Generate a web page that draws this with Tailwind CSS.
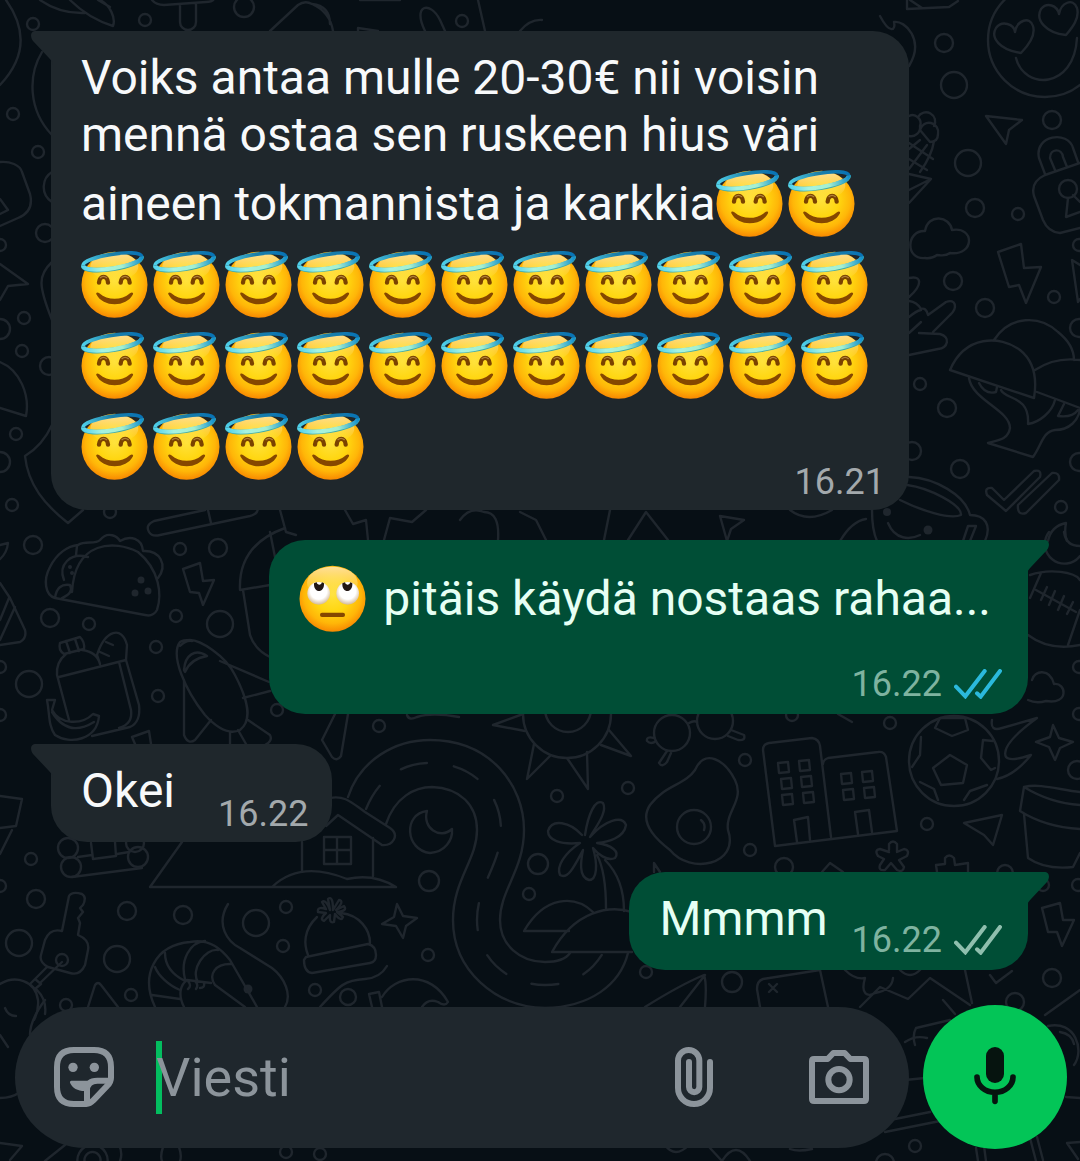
<!DOCTYPE html>
<html lang="fi">
<head>
    <meta charset="UTF-8">
    <meta name="viewport" content="width=device-width, initial-scale=1.0">
    <title>Keskustelu</title>
    <script src="https://cdn.jsdelivr.net/npm/@tailwindcss/browser@4"></script>
</head>
<body class="bg-[#070f15] font-['Roboto','Liberation_Sans',sans-serif]">
    <!-- Shared emoji and icon shapes -->
    <svg class="absolute h-0 w-0" aria-hidden="true">
        <defs>
            <radialGradient id="skin" cx="0.5" cy="0.44" r="0.58">
                <stop offset="0" stop-color="#ffe23c"></stop>
                <stop offset="0.45" stop-color="#ffd610"></stop>
                <stop offset="0.75" stop-color="#ffb608"></stop>
                <stop offset="1" stop-color="#f78200"></stop>
            </radialGradient>
            <linearGradient id="shine" x1="0" y1="0" x2="0" y2="1">
                <stop offset="0" stop-color="#ffe2a0" stop-opacity="0.95"></stop>
                <stop offset="1" stop-color="#ffe46a" stop-opacity="0"></stop>
            </linearGradient>
            <linearGradient id="ringBack" x1="0" y1="0" x2="1" y2="0">
                <stop offset="0" stop-color="#4fd0ea"></stop>
                <stop offset="0.5" stop-color="#1c7fa8"></stop>
                <stop offset="1" stop-color="#0873b5"></stop>
            </linearGradient>
            <linearGradient id="ringFront" x1="0" y1="0" x2="1" y2="0">
                <stop offset="0" stop-color="#55d3ee"></stop>
                <stop offset="0.3" stop-color="#a6f3e0"></stop>
                <stop offset="0.65" stop-color="#a4efcf"></stop>
                <stop offset="1" stop-color="#1390cf"></stop>
            </linearGradient>
            <radialGradient id="eyeball" cx="0.5" cy="0.4" r="0.6">
                <stop offset="0.6" stop-color="#ffffff"></stop>
                <stop offset="1" stop-color="#d3b998"></stop>
            </radialGradient>
        </defs>
        <symbol id="innocent" viewBox="0 0 216 243">
            <circle cx="100.5" cy="122" r="99" fill="url(#skin)"></circle>
            <ellipse cx="100" cy="68" rx="72" ry="42" fill="url(#shine)"></ellipse>
            <g transform="rotate(-9 94 51)" fill="none">
                <path d="M5 51C5 24 183 24 183 51" stroke="url(#ringBack)" stroke-width="11"></path>
                <path d="M5 52C5 82 183 82 183 52" stroke="#3fa9a8" stroke-width="14"></path>
                <path d="M5 51C5 80 183 80 183 51" stroke="url(#ringFront)" stroke-width="12"></path>
            </g>
            <g fill="none" stroke="#7a4200" stroke-width="13" stroke-linecap="round">
                <path d="M54 116C55 93 80 93 81 116"></path>
                <path d="M119 116C120 93 145 93 146 116"></path>
            </g>
            <g fill="none" stroke="#b0803a" stroke-width="4" stroke-linecap="round">
                <path d="M58 101Q67 93 77 101"></path>
                <path d="M123 101Q132 93 142 101"></path>
            </g>
            <path d="M46 151C44 145 50 143 55 148C80 170 122 170 147 148C152 143 158 145 156 151C136 191 66 191 46 151Z" fill="#854700"></path>
        </symbol>
        <symbol id="eyeroll" viewBox="0 0 216 243">
            <circle cx="100.5" cy="122" r="99" fill="url(#skin)"></circle>
            <ellipse cx="100" cy="74" rx="76" ry="48" fill="url(#shine)"></ellipse>
            <circle cx="59" cy="106" r="34" fill="url(#eyeball)"></circle>
            <circle cx="146" cy="106" r="34" fill="url(#eyeball)"></circle>
            <path d="M45 76C43 107 77 107 75 76L69 73Q67 81 60 80Q53 79 53 73Z" fill="#231815"></path>
            <path d="M130 76C128 107 162 107 160 76L154 73Q152 81 145 80Q138 79 138 73Z" fill="#231815"></path>
            <rect x="63" y="164" width="75" height="13" rx="6" fill="#854700"></rect>
        </symbol>
        <symbol id="ticks" viewBox="0 0 144 90">
            <path d="M6 53L34 82L92 6M69 73L80 83L138 6" fill="none" stroke="currentColor" stroke-width="12" stroke-linecap="round" stroke-linejoin="miter"></path>
        </symbol>
        <symbol id="tail" viewBox="0 0 22 34">
            <path d="M0 0H17C23 0 23 6 20 10L4 27Q0 31 0 34Z" fill="currentColor"></path>
        </symbol>
    </svg>

    <div class="relative flex min-h-screen flex-col overflow-hidden">
        <!-- Wallpaper doodles -->
        <svg class="absolute top-0 left-0 h-[1161px] w-[1080px]" viewBox="0 0 1080 1161" fill="none" stroke="#1f262d" stroke-width="2.4" stroke-linecap="round" stroke-linejoin="round" aria-hidden="true">
            <g id="dots"></g>
            <g fill="#1f262d" stroke="none">
                <circle cx="887" cy="512" r="4"></circle><circle cx="928" cy="530" r="4.500"></circle>
                <circle cx="141" cy="580" r="3.500"></circle><circle cx="148" cy="591" r="3.500"></circle><circle cx="135" cy="593" r="3.500"></circle>
                <circle cx="248" cy="989" r="4.500"></circle><circle cx="70" cy="567" r="2"></circle><circle cx="72" cy="573" r="2"></circle>
            </g>
            <!-- top edge -->
            <path d="M6 0Q38 45 0 85M40 0Q60 14 85 13M70 0C85 15 100 22 113 26C116 18 110 5 100 0M98 0l12 7"></path>
            <path d="M152 0q4 5 12 5l42-3q6 0 8-3M180 5V22a8 8 0 0 0 16 0V4M270 31L298 5Q305 0 312 4Q330 12 333 31M312 4q18 2 18 20"></path>
            <path d="M425 31C412 5 430 0 440 20l5 11M478 0L485 31M520 31q10-12 22-11M360 0h40M358 31v-3l20 3"></path>
            <path d="M907 0v9l42-2 9-6M910 0l12 8M880 16C890 35 896 30 894 22C905 20 925 40 909 66"></path>
            <!-- left edge -->
            <path d="M42 52C28 75 28 110 52 135M0 162C10 161 20 165 22 172L30 194C33 206 28 214 18 218L0 226M0 199L8 210L0 214M0 264L28 284L8 286L0 300"></path>
            <path d="M52 262C38 275 38 285 52 320M0 362C20 370 30 395 26 416L0 408M52 425C45 440 35 450 25 456C28 485 45 505 68 523L83 510M52 172c-10 6-12 22 0 30"></path>
            <!-- heart eyes, berry, plane -->
            <circle cx="1045" cy="40" r="57"></circle>
            <path d="M1016 58C1024 90 1074 90 1077 38M1021 53C1000 50 990 38 996 28C1002 20 1014 24 1015 32C1017 20 1030 16 1033 26C1036 36 1028 46 1021 53ZM1066 35C1046 33 1035 20 1041 9C1047 2 1057 5 1059 14C1061 3 1073-3 1077 8C1080 18 1072 28 1066 35Z"></path>
            <path d="M909 116a8 8 0 0 1 11 10a9 9 0 0 1-11 10M918 117a9 9 0 0 1 16 9M920 130a9 9 0 0 1 18 4q0 8-8 8l-10-12M934 141C932 155 925 165 920 172M909 149l11-9M909 143l24 16M909 159l18 11M927 145l-18 24M909 174L931 179L909 203M909 190L931 179"></path>
            <path d="M986 116L1022 120L1009 130L1006 144Z"></path>
            <!-- padlock -->
            <path d="M1045 174L1039 158C1034 135 1068 130 1073 148L1078 162M1080 163L1045 175Q1030 182 1034 196L1043 220Q1048 232 1060 233L1080 228M1055 170L1050 158C1050 148 1062 148 1063 157l4 10M1068 198L1066 217L1080 212M1073 195L1080 202"></path>
            <circle cx="1068" cy="189" r="9"></circle>
            <!-- cloud, bolt, hand -->
            <path d="M925 258C905 260 906 230 925 231C928 213 950 216 952 230C975 226 975 256 950 253C945 257 940 255 937 255Q932 259 925 258Z"></path>
            <path d="M998 252L1021 244L1024 268L1041 267L1026 303L1019 285L1009 287ZM1080 265l-8-5 6 42 2-3"></path>
            <path d="M909 278C922 275 923 285 909 297M909 301q8 1 12 8q5-2 7 6L946 302C956 298 958 308 950 315L933 332M909 333l12-11M909 317q7-6 12-7M919 333L940 334C951 337 948 348 938 349L909 355"></path>
            <!-- mushrooms -->
            <path d="M950 370C965 335 1000 335 1020 350C1035 362 1037 380 1034 398ZM994 340C1010 315 1040 315 1058 332C1068 340 1074 350 1074 360M1035 370C1050 360 1065 358 1080 360M1037 392L1080 408"></path>
            <path d="M969 378C972 400 1010 410 1010 428C1008 440 998 440 988 443L1033 457C1042 445 1042 432 1055 430C1070 430 1078 420 1080 410M1001 390C1005 400 1030 395 1028 424C1040 422 1052 412 1055 400M979 383q6 12 17 9l1-5M1064 404l-6 12q14 2 20-6"></path>
            <!-- double tick, cup -->
            <path d="M987 495q-3-8 5-7l12 12L1034 471q8-2 6 6L1006 511ZM1018 505L1052 473q8-1 7 7L1026 513q-9 3-8-8Z"></path>
            <path d="M909 477C935 478 965 495 970 515C985 515 992 525 985 541M907 485C930 488 962 505 961 515C950 520 920 510 900 500M963 541l5-15h8l-6 15M888 523C895 540 910 540 920 535M1048 541q3-15 18-18q-2 10 1 18M872 510q0 20 5 31"></path>
            <!-- rugby ball, cloud -->
            <path d="M1049 532a18 18 0 1 0 31 24M1064 532q2 14 16 14M1030 575C1050 568 1075 572 1080 580M1028 635C1045 648 1065 648 1080 645M1041 573L1030 598M1080 610L1068 645M1036 590L1076 612M1047 587l-6 13M1055 591l-6 14M1064 596l-6 14M1073 602l-6 12"></path>
            <path d="M1028 700Q1036 704 1046 701C1070 705 1066 682 1054 684C1050 668 1034 670 1032 680"></path>
            <!-- strip between the first two bubbles -->
            <path d="M205 510L154 521q-9 4-5 11q3 5 11 3L250 516q8-2 8-8M208 510l3 13M0 545l8-2q-1 10-8 16M280 510l6 22 10 3M345 510l8 14 13-4 2 20M384 540l6-22 22 4 14-12M460 520q10-14 24-8q16 0 14 28M520 512l16 8 10 20M610 510l-6 30M628 540l18-28 22 28M720 516l24 4-13 9-4 12ZM790 510q18 14 42 0M840 541q12-20 26-22"></path>
            <!-- taco, bolt -->
            <path d="M72 592C75 540 115 540 138 552C160 570 162 595 157 610Q153 617 145 615L55 598C45 595 43 580 50 567C57 553 68 546 78 545C85 540 95 545 100 540C108 530 118 537 120 541C130 535 142 538 143 551C160 550 168 565 158 578M77 546l-1 9M88 557C70 552 58 565 64 580M55 598q2-15 15-13q4 8-8 13"></path>
            <path d="M183 569L200 563L203 581L214 580L203 605L199 593L190 592ZM0 583L10 598L25 630Q27 638 20 642L0 645M9 598L0 620M15 607L0 640"></path>
            <path d="M285 528Q238 545 240 590L270 585M243 590L250 635Q255 650 270 657M270 532l5 25"></path>
            <!-- jar and fruit -->
            <path d="M60 643l20-6q5 5 4 12l-20 5q-6-4-4-11M66 641l4 12M75 639l4 12M66 654Q56 662 57 675L69 720M82 650q15 2 18 14M59 677L126 660L139 705Q141 722 130 727L92 736M119 662L131 710q2 14-12 18M97 655C105 630 122 625 127 645L126 660M100 664l-3-9M106 642l7 3M100 652l9 4M47 700h8l-3 10C60 725 82 725 93 714l6 2C97 740 70 745 55 735C48 725 50 715 47 700M52 712q16 26 42 10"></path>
            <!-- rocket -->
            <path d="M180 642C170 655 185 690 205 715Q225 737 240 730C253 720 248 700 235 675C225 655 200 640 190 640Q183 640 180 642ZM184 670C185 655 195 648 207 656C195 658 188 665 185 672ZM180 646q6-6 12-5M220 661L269 682M243 698L270 691M184 680V735Q188 745 195 740L211 720M230 733v11M248 720L270 735q3 6-5 10M238 730l8 14M132 737l17-6 2 13M132 737l3 7"></path>
            <!-- winding road -->
            <path d="M348 797C360 760 395 740 430 740C490 740 524 785 524 830C524 870 500 890 500 920C500 945 520 962 545 962C555 962 565 960 570 953M386 824C395 797 415 787 432 787C460 788 477 805 477 830C477 860 453 880 453 920C453 970 495 1007 545 1008C590 1007 620 985 628 953"></path>
            <path d="M366 809C380 775 405 763 430 763C475 763 501 795 501 830C501 865 477 885 477 920C477 960 510 985 545 985C570 985 590 975 603 953" stroke-dasharray="27 27"></path>
            <!-- house, moon, sparkle, hat -->
            <path d="M330 798C345 795 352 803 365 812L390 828C400 835 393 846 382 845L338 815L326 826M373 838V876M324 837h27v27h-27zM337 837v27M324 850h27M347 879C365 875 380 877 396 887H150L182 842M302 842v29M272 887Q300 860 347 879"></path>
            <path d="M427 811C403 814 405 850 430 853C445 852 453 840 452 829C440 840 422 828 427 811ZM397 904L403 916L417 918L406 926L403 938L396 926L382 924L394 917Z"></path>
            <path d="M341 913C360 915 370 930 370 943M317 917C303 930 304 945 308 955M306 957L368 944Q376 946 376 955Q376 962 370 963L312 973Q304 972 304 960ZM330 910l-2-11q5-4 5 11l6-10q6 1-3 10l8-4q4 5-7 6l6 5q-2 5-8-3l-1 8q-5 2-4-7l-6 6q-5-2 2-8l-8-1q-1-6 8-3l-4-7q4-3 8 8"></path>
            <!-- sun -->
            <circle cx="567" cy="714" r="44"></circle><circle cx="568" cy="709" r="23"></circle>
            <path d="M525 731L493 725L523 714M534 744L527 779L551 755M567 758L588 789L587 752M609 730L631 756L601 745M348 714L341 756q-4 6-9 1L322 740L335 714M407 715q2 6 10 2q15-5 42 0"></path>
            <!-- palm island -->
            <path d="M585 835C588 815 595 798 603 803C608 812 595 828 590 837C605 820 622 815 626 825C624 838 608 842 597 843C612 845 620 852 615 858C607 862 597 853 593 848C598 865 597 880 589 880C578 877 581 860 583 850C575 865 568 880 560 875C556 866 565 853 580 843C560 845 548 840 548 831C552 818 570 822 582 835M597 855C605 870 606 890 606 909M605 860C620 875 624 895 624 911M569 931H524C545 895 575 895 593 912M632 952H552C575 910 610 905 632 912"></path>
            <!-- glasses, egg -->
            <circle cx="672" cy="733" r="18"></circle><circle cx="715" cy="721" r="18"></circle><circle cx="694" cy="827" r="17"></circle>
            <path d="M654 738q-8-2-7 3q4 4 9 0M667 751l-8 12q3 5 8-1l4-9M689 723q5-3 8-1M731 730l13 5q2 6-6 5l-10-4M838 714l14 8M701 820q5 4 3 10M695 770C705 748 725 760 735 780C745 800 725 812 728 830C740 865 690 875 670 850C650 835 640 820 650 805C665 785 685 785 695 770"></path>
            <!-- buildings -->
            <path d="M775 846L763 750Q763 744 769 743L812 738Q819 739 820 746L831 837M775 846L897 831L886 757Q884 751 878 752L828 758Q823 760 823 764M797 842L794 820L808 817L810 840M858 834L855 812L869 810L872 832"></path>
            <path d="M778 763l10-1 1 10-10 1zM799 761l10-1 1 10-10 1zM781 779l10-1 1 10-10 1zM801 777l10-1 1 10-10 1zM782 795l10-1 1 10-10 1zM803 793l10-1 1 10-10 1zM841 774l10-1 1 10-10 1zM862 772l10-1 1 10-10 1zM843 790l10-1 1 10-10 1zM864 788l10-1 1 10-10 1z"></path>
            <!-- flaming football -->
            <circle cx="954" cy="761" r="45"></circle>
            <path d="M950 755L967 765L963 783L941 785L933 768ZM935 728L952 736L968 730L965 718L940 718ZM921 737l-1 18-8 12M993 741l-10-1-2 18 10 12 4-2M920 782l14 7 4 11M964 800l6-9 17-6M992 720q-2 12 10 8L1037 718Q1000 745 1006 757Q1010 762 1031 755Q1015 775 997 779M1053 725l6 13 14 4-13 6-5 12-6-13-13-5 14-5z"></path>
            <!-- plane, pot, star, puzzle, bolt -->
            <path d="M964 823L1002 815L993 845L984 835ZM1024 787C1040 783 1060 790 1080 792M1024 787Q1050 803 1080 805M1024 787L1020 811Q1045 827 1080 829M1024 814L1028 858Q1045 870 1073 867L1080 853"></path>
            <path d="M889 850v-6q4-5 8 0v8l7-3q6 1 3 7l-8 4 5 7q-1 6-7 3l-6-7-6 7q-7 1-5-5l4-6-6-3q-4-6 2-7l9 3M937 872l-1-7 9-1v-6q4-5 9 0l1 7 13-2v9M822 872l8-9 13 9M1042 908L1060 903L1063 920L1074 920L1062 946L1057 932L1048 932ZM654 872v-9l6 9"></path>
            <!-- train, pot, key -->
            <circle cx="68" cy="848" r="10"></circle><circle cx="71" cy="867" r="10"></circle><circle cx="138" cy="857" r="10"></circle><circle cx="135" cy="843" r="9"></circle><circle cx="62" cy="960" r="6"></circle>
            <path d="M72 877L142 868M91 843l2 16 23-3-1-14M78 857l14-2M117 854l12-2M0 796L22 799L16 826L0 828M12 830L0 854"></path>
            <path d="M62 931L69 896Q72 891 82 894Q87 897 83 905l-3 3 3 4-5 6 2 5-2 12Q90 940 88 950L85 965Q80 976 70 973L48 967Q39 962 41 955L45 940Q50 928 62 931M62 962L40 983M47 967l-12 12M30 984l5-5 6 5-6 5zM0 984C15 975 35 980 38 1000q1 10-4 20M37 990q10 10 8 24M5 1008q3 8 11 8"></path>
            <!-- shrimp -->
            <path d="M88 1007L95 985q3-4 6 0L118 1007M155 1007C140 975 155 945 190 942C210 938 222 950 230 960L257 1007M245 1007L215 985C208 975 215 963 232 964M198 982C190 970 205 948 218 950M185 979C180 960 190 942 205 941M185 981q-20-10-20-28M180 990C168 985 158 975 155 967M152 995l28 4M184 1007C178 995 180 985 187 980l24 3M188 981q4 5 0 8M195 981q4 4 1 8M204 983q1 5-4 5M228 904C215 925 228 942 240 948L272 968C285 978 292 995 285 1007"></path>
            <!-- bottom -->
            <circle cx="348" cy="997" r="8"></circle>
            <path d="M320 1007C340 985 345 980 365 979Q380 978 387 966M369 994l10-2 3 15M369 994l3 13M382 997C395 975 430 970 448 1002q-3 5-10 0q-10-4-16 5"></path>
            <path d="M645 1007Q680 985 704 975q3 8 1 32M680 1007L705 975M760 1007l-3-18Q757 981 763 979L820 970L828 1007M769 984l8 8m0-8l-8 8M845 970q10 10 20 8C860 995 868 997 875 993Q892 990 893 978M860 1007L880 987L908 999L930 978L970 1005M965 970L972 1003M990 975l6 8 16-12M900 970q10 10 20 0M1045 1015L1080 990M943 1000l12 14M955 1020l-10 8"></path>
            <path d="M45 1000Q30 1020 30 1035M0 1035l8 12M0 1098q12 0 20-6M0 1143l22 3-12 14M45 1161L65 1145M92 1145a15 15 0 1 0 1 0M92 1152a8 8 0 1 0 1 0M119 1145q4 8 1 16M163 1147q-6 18 8 20q14-2 8-20M710 1148l12 13q14-22 28 0M665 1145q10 14 24 0M790 1149q8 3 22 0"></path>
            <path d="M915 1045q-3-10 1-17L950 1020M905 1042q10-7 22-4M885 1132L940 1121M890 1120L930 1112M905 1080L925 1078M1048 1026C1075 1020 1085 1050 1074 1065M1060 1032q12 2 14 12M1066 1097l14 1M976 1148l2 13M984 1146l2 15M1030 1138l6 23M1037 1137l6 23M1080 1142l-13 1 11 16"></path>
        </svg>

        <!-- Messages -->
        <main class="relative flex flex-1 flex-col gap-[30px] px-[51px] pt-[31px] text-[48px] leading-[57px]">
            <article class="relative grid max-w-[858px] self-start rounded-[36px] rounded-tl-none bg-[#1f272c] text-[#f7f9fb]">
                <svg class="absolute top-0 -left-[20px] h-[34px] w-[22px] -scale-x-100 text-[#1f272c]" aria-hidden="true"><use href="#tail"></use></svg>
                <p class="col-start-1 row-start-1 px-[30px] pt-[18px] pb-[23px]">Voiks antaa mulle 20-30€ nii voisin mennä ostaa sen ruskeen hius väri aineen tokmannista ja karkkia<span id="halos" role="img" aria-label="hymyilevät sädekehäkasvot"></span></p>
                <time class="col-start-1 row-start-1 self-end justify-self-end pr-[24px] pb-[7px] text-[36px] leading-[42px] text-[#a3a9ac]">16.21</time>
            </article>

            <article class="relative mr-px flex flex-col gap-[24px] self-end rounded-[36px] rounded-tr-none bg-[#004e36] text-[#e6fff4]">
                <svg class="absolute top-0 -right-[21px] h-[34px] w-[22px] text-[#004e36]" aria-hidden="true"><use href="#tail"></use></svg>
                <p class="pt-[18px] pr-[37px] pl-[30px]"><svg class="inline-block h-[81px] w-[72px] align-[-24px]" role="img" aria-label="silmiään pyörittävät kasvot"><use href="#eyeroll"></use></svg> pitäis käydä nostaas rahaa...</p>
                <div class="flex items-center justify-end gap-3 pr-[26px] pb-[9px] text-[36px] leading-[42px] text-[#7fb3a0]">
                    <time>16.22</time>
                    <svg class="h-[30px] w-[48px] text-[#2bb9dc]" role="img" aria-label="Luettu"><use href="#ticks"></use></svg>
                </div>
            </article>

            <article class="relative flex items-end gap-[43px] self-start rounded-[36px] rounded-tl-none bg-[#1f272c] text-[#f7f9fb]">
                <svg class="absolute top-0 -left-[20px] h-[34px] w-[22px] -scale-x-100 text-[#1f272c]" aria-hidden="true"><use href="#tail"></use></svg>
                <p class="pt-[18px] pb-[23px] pl-[30px]">Okei</p>
                <time class="pr-[24px] pb-[7px] text-[36px] leading-[42px] text-[#a3a9ac]">16.22</time>
            </article>

            <article class="relative mr-px flex items-end gap-[24px] self-end rounded-[36px] rounded-tr-none bg-[#004e36] text-[#e6fff4]">
                <svg class="absolute top-0 -right-[21px] h-[34px] w-[22px] text-[#004e36]" aria-hidden="true"><use href="#tail"></use></svg>
                <p class="pt-[18px] pb-[23px] pl-[30px]">Mmmm</p>
                <div class="flex items-center gap-3 pr-[26px] pb-[9px] text-[36px] leading-[42px] text-[#7fb3a0]">
                    <time>16.22</time>
                    <svg class="h-[30px] w-[48px] text-[#8fbfae]" role="img" aria-label="Toimitettu"><use href="#ticks"></use></svg>
                </div>
            </article>
        </main>

        <!-- Composer -->
        <form class="relative flex items-center gap-[14px] pt-[33px] pr-[13px] pb-3 pl-[15px]">
            <div class="flex h-[141px] min-w-0 flex-1 items-center rounded-full bg-[#1f272d] pr-10 pl-[39px] text-[#8c949b]">
                <button type="button" class="shrink-0" aria-label="Tarrat">
                    <svg class="h-[60px] w-[60px]" viewBox="0 0 180 180" fill="none" stroke="currentColor" stroke-width="18">
                        <path d="M97 171H60Q9 171 9 120V60Q9 9 60 9H120Q171 9 171 60V92Q171 105 160 116L118 160Q108 171 97 171Z"></path>
                        <path d="M168 101H130Q99 101 99 130V168"></path>
                        <g fill="currentColor" stroke="none">
                            <circle cx="57" cy="61" r="14"></circle>
                            <circle cx="121" cy="61" r="14"></circle>
                            <path d="M52 101H115L98 132C74 134 55 124 48 107Q47 101 52 101Z"></path>
                        </g>
                    </svg>
                </button>
                <div class="relative ml-[42px] min-w-0 flex-1">
                    <span class="absolute top-0 left-0 h-[73px] w-[6px] bg-[#03bd5f]"></span>
                    <input type="text" placeholder="Viesti" aria-label="Viesti" class="relative block h-[73px] w-full bg-transparent text-[54px] text-[#f7f9fb] outline-none placeholder:text-[#8c949b]">
                </div>
                <button type="button" class="shrink-0" aria-label="Liitä">
                    <svg class="h-[60px] w-[60px]" viewBox="0 0 180 180" fill="none" stroke="currentColor" stroke-width="18" stroke-linecap="round">
                        <path d="M138 45V123A48 48 0 0 1 42 123V41A32 32 0 0 1 106 41V120A15 15 0 0 1 75 120V45"></path>
                    </svg>
                </button>
                <button type="button" class="ml-[85px] shrink-0" aria-label="Kamera">
                    <svg class="h-[60px] w-[60px]" viewBox="0 0 180 180" fill="none" stroke="currentColor" stroke-width="18" stroke-linejoin="round">
                        <path d="M15 36H56L73 18H107L124 36H165Q171 36 171 42V156Q171 162 165 162H15Q9 162 9 156V42Q9 36 15 36Z"></path>
                        <circle cx="90" cy="98" r="32"></circle>
                    </svg>
                </button>
            </div>
            <button type="button" class="grid h-36 w-36 shrink-0 place-items-center rounded-full bg-[#03c557]" aria-label="Ääniviesti">
                <svg class="h-[60px] w-[60px]" viewBox="0 0 180 180" fill="none" stroke="#06140f" stroke-width="17" stroke-linecap="round">
                    <rect x="63" y="0" width="54" height="108" rx="27" fill="#06140f" stroke="none"></rect>
                    <path d="M36 90A54 46 0 0 0 144 90M90 138V163"></path>
                </svg>
            </button>
        </form>
    </div>

    <script>
        // 28 halo faces after the first message
        document.getElementById('halos').innerHTML =
            '<svg class="inline-block h-[81px] w-[72px] align-[-24px]" aria-hidden="true"><use href="#innocent"></use></svg>'.repeat(28);

        // Wallpaper bubbles: x, y, radius
        const dots = [
            [33,24,6],[145,20,6],[244,7,10],[462,21,6],[13,114,6],[38,152,6],[45,233,9],[0,245,6],[24,318,6],[0,329,10],[22,351,6],[49,366,9],[16,434,6],[0,462,10],[12,505,6],
            [944,43,9],[954,85,13],[1052,120,9],[968,163,13],[975,208,9],[1018,214,6],[1079,245,6],[953,281,9],[985,308,9],[1054,297,6],[1079,328,9],[920,384,6],[947,408,9],[912,451,9],[960,469,9],[1079,462,9],[1061,507,6],
            [110,512,6],[33,545,9],[180,549,6],[218,548,9],[50,618,9],[89,624,6],[176,616,6],[220,624,13],[156,647,6],[29,684,13],[0,667,6],[0,715,6],[158,696,6],[277,710,6],[1079,667,6],[1079,714,6],
            [379,726,6],[557,796,6],[628,788,6],[429,881,10],[538,864,10],[529,894,6],[428,955,6],[646,972,6],[745,760,6],[890,723,6],[927,824,6],[750,850,6],[784,867,9],[792,715,6],[1077,770,9],[732,982,10],[1052,978,9],[1015,1002,9],[1005,873,8],[1078,885,6],[1043,885,6],
            [31,859,6],[0,886,6],[36,899,9],[127,911,9],[183,915,9],[256,923,13],[286,907,6],[19,943,13],[117,959,13],[283,946,6],[315,990,6],[131,995,6],[66,1005,6],[286,1152,6],[320,1154,6],[915,1146,6],[885,1163,9]
        ];
        document.getElementById('dots').innerHTML = dots.map(([x, y, r]) => `<circle cx="${x}" cy="${y}" r="${r}"></circle>`).join('');
    </script>
</body>
</html>
